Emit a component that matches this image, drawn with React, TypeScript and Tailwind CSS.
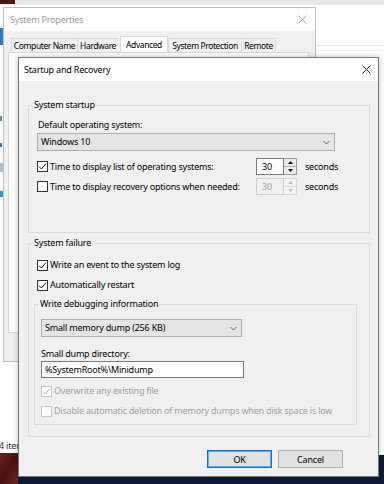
import React from 'react';

const font = { fontFamily: '"Noto Sans", "Open Sans", sans-serif' };

const Check: React.FC<{ checked?: boolean; disabled?: boolean }> = ({ checked = false, disabled = false }) => (
    <span className={`w-[11px] h-[11px] border bg-white flex items-center justify-center shrink-0 ${disabled ? 'border-[#c4c4c4]' : 'border-[#333333]'}`}>
        {checked && (
            <svg width="9" height="9" viewBox="0 0 9 9">
                <path d="M1 4.6 L3.4 7 L8 1.6" fill="none" stroke={disabled ? '#b4b4b4' : '#222222'} strokeWidth="1" />
            </svg>
        )}
    </span>
);

const Chevron = () => (
    <svg width="7" height="5" viewBox="0 0 7 5">
        <path d="M0.5 1 L3.5 4 L6.5 1" fill="none" stroke="#606060" strokeWidth="1" />
    </svg>
);

const Spinner: React.FC<{ disabled?: boolean }> = ({ disabled = false }) => (
    <div className="flex h-[17px]">
        <div className={`w-[28px] border flex items-center pl-[5px] ${disabled ? 'border-[#cccccc] bg-[#f0f0f0] text-[#a0a0a0]' : 'border-[#7a7a7a] bg-white text-black'}`}>30</div>
        <div className={`w-[13px] flex flex-col border-y border-r ${disabled ? 'border-[#d6d6d6]' : 'border-[#9a9a9a]'}`}>
            <div className={`flex-1 flex items-center justify-center border-b ${disabled ? 'bg-[#f4f4f4] border-[#dcdcdc]' : 'bg-[#ececec] border-[#b0b0b0]'}`}>
                <svg width="5" height="3" viewBox="0 0 5 3"><path d="M0 3 L2.5 0 L5 3 Z" fill={disabled ? '#bdbdbd' : '#111111'} /></svg>
            </div>
            <div className={`flex-1 flex items-center justify-center ${disabled ? 'bg-[#f4f4f4]' : 'bg-[#ececec]'}`}>
                <svg width="5" height="3" viewBox="0 0 5 3"><path d="M0 0 L2.5 3 L5 0 Z" fill={disabled ? '#bdbdbd' : '#111111'} /></svg>
            </div>
        </div>
    </div>
);

const CloseX: React.FC<{ color: string }> = ({ color }) => (
    <svg width="9" height="9" viewBox="0 0 9 9">
        <path d="M0.5 0.5 L8.5 8.5 M8.5 0.5 L0.5 8.5" stroke={color} strokeWidth="1" />
    </svg>
);

const tabs = [
    { label: 'Computer Name', w: 'w-[66px]' },
    { label: 'Hardware', w: 'w-[41px]' },
    { label: 'Advanced', w: 'w-[48px]' },
    { label: 'System Protection', w: 'w-[73px]' },
    { label: 'Remote', w: 'w-[35px]' },
];

export default function App() {
    return (
        <div className="relative w-[384px] h-[484px] overflow-hidden bg-white text-[9px] leading-[16px] tracking-[-0.2px] text-black" style={font}>
            {/* desktop / explorer behind */}
            <div className="absolute left-0 top-0 w-full h-[5px] bg-[#e9e9e9]" />
            <div className="absolute left-0 top-0 w-[15px] h-[4px] bg-[#4a1515]" />
            <div className="absolute left-[316px] top-[45px] right-0 h-px bg-[#e6e6e6]" />
            <div className="absolute left-[316px] top-[50px] right-0 h-px bg-[#efefef]" />
            <div className="absolute left-0 top-[28px] w-[3px] h-[17px] bg-[#2a78c8]" />
            <div className="absolute left-0 top-[116px] w-[2px] h-[5px] bg-[#5aa05a]" />
            <div className="absolute left-0 top-[143px] w-[2px] h-[4px] bg-[#2a78c8]" />
            <div className="absolute left-0 top-[163px] w-[3px] h-[9px] bg-[#a9bfd6]" />
            <div className="absolute left-0 top-[191px] w-[3px] h-[6px] bg-[#1aa0c8]" />
            <div className="absolute left-[-1px] top-[438px] text-[#333333]">4 items</div>
            <div className="absolute left-0 top-[453px] w-[18px] h-[31px] bg-gradient-to-br from-[#6b2020] via-[#4a1212] to-[#6a2a22]" />
            <div className="absolute left-[18px] top-[455px] right-0 bottom-0 bg-[#0d1b38]" />

            {/* System Properties (inactive) */}
            <div className="absolute left-[3px] top-[7px] w-[313px] h-[355px] border border-[#bdbdbd] bg-[#f0f0f0] flex flex-col">
                <div className="h-[23px] bg-white flex items-center justify-between pl-[6px] pr-[8px] text-[#9a9a9a]">
                    <span>System Properties</span>
                    <CloseX color="#a8a8a8" />
                </div>
                <div className="flex items-end pl-[7px] pt-[5px] text-[8.5px] tracking-[-0.4px]">
                    {tabs.map(t => t.label === 'Advanced' ? (
                        <div key={t.label} className={`${t.w} h-[17px] ml-[2px] -mb-px bg-white border-x border-t border-[#d9d9d9] flex items-center justify-center whitespace-nowrap`}>{t.label}</div>
                    ) : (
                        <div key={t.label} className={`${t.w} h-[14px] border-l border-t border-[#d9d9d9] last:border-r flex items-center justify-center whitespace-nowrap`}>{t.label}</div>
                    ))}
                </div>
                <div className="ml-[4px] mr-[6px] h-[281px] bg-white border border-[#d9d9d9]" />
            </div>

            {/* Startup and Recovery */}
            <div className="absolute left-[18px] top-[57px] w-[361px] h-[420px] border border-[#777777] bg-[#f0f0f0] flex flex-col shadow-[0_0_6px_rgba(0,0,0,0.25)]">
                <div className="h-[23px] bg-white flex items-center justify-between pl-[5px] pr-[7px]">
                    <span>Startup and Recovery</span>
                    <CloseX color="#222222" />
                </div>
                <div className="flex flex-col pl-[9px] pr-[8px] pt-[16px]">
                    <fieldset className="border border-[#dcdcdc] pl-[8px] pr-[8px] pt-[4px] pb-[37px]">
                        <legend className="px-[1px] -ml-[4px]">System startup</legend>
                        <div className="pl-px">Default operating system:</div>
                        <div className="w-[298px] h-[18px] border border-[#adadad] bg-[#e5e5e5] flex items-center justify-between pl-[3px] pr-[4px]">
                            <span>Windows 10</span>
                            <Chevron />
                        </div>
                        <div className="mt-[7px] flex items-center">
                            <div className="w-[219px] flex items-center gap-[2px]">
                                <Check checked />
                                <span>Time to display list of operating systems:</span>
                            </div>
                            <Spinner />
                            <span className="ml-[8px]">seconds</span>
                        </div>
                        <div className="mt-[3px] flex items-center">
                            <div className="w-[219px] flex items-center gap-[2px]">
                                <Check />
                                <span>Time to display recovery options when needed:</span>
                            </div>
                            <Spinner disabled />
                            <span className="ml-[8px]">seconds</span>
                        </div>
                    </fieldset>

                    <fieldset className="mt-[2px] border border-[#dcdcdc] pl-[5px] pr-[12px] pt-[6px] pb-[11px]">
                        <legend className="px-[1px] -ml-px">System failure</legend>
                        <div className="pl-[3px] flex items-center gap-[2px]">
                            <Check checked />
                            <span>Write an event to the system log</span>
                        </div>
                        <div className="mt-[4px] pl-[3px] flex items-center gap-[2px]">
                            <Check checked />
                            <span>Automatically restart</span>
                        </div>
                        <fieldset className="mt-[3px] border border-[#dcdcdc] pl-[6px] pr-[6px] pt-[7px] pb-[6px]">
                            <legend className="px-[1px] -ml-[2px]">Write debugging information</legend>
                            <div className="w-[201px] h-[18px] border border-[#adadad] bg-[#e5e5e5] flex items-center justify-between pl-[3px] pr-[4px]">
                                <span>Small memory dump (256 KB)</span>
                                <Chevron />
                            </div>
                            <div className="mt-[10px] leading-[14px]">Small dump directory:</div>
                            <div className="w-[203px] h-[17px] border border-[#7a7a7a] bg-white flex items-center pl-[3px]">%SystemRoot%\Minidump</div>
                            <div className="mt-[6px] flex items-center gap-[2px] leading-[14px] text-[#a0a0a0]">
                                <Check checked disabled />
                                <span>Overwrite any existing file</span>
                            </div>
                            <div className="mt-[6px] flex items-center gap-[2px] leading-[14px] text-[#a0a0a0]">
                                <Check disabled />
                                <span>Disable automatic deletion of memory dumps when disk space is low</span>
                            </div>
                        </fieldset>
                    </fieldset>

                    <div className="mt-[13px] flex justify-end gap-[6px] pr-[27px]">
                        <button className="w-[65px] h-[18px] bg-[#e1e1e1] border border-[#0078d7] shadow-[inset_0_0_0_1px_#6aa8e6] leading-none">OK</button>
                        <button className="w-[65px] h-[18px] bg-[#e1e1e1] border border-[#adadad] leading-none">Cancel</button>
                    </div>
                </div>
            </div>
        </div>
    );
}
